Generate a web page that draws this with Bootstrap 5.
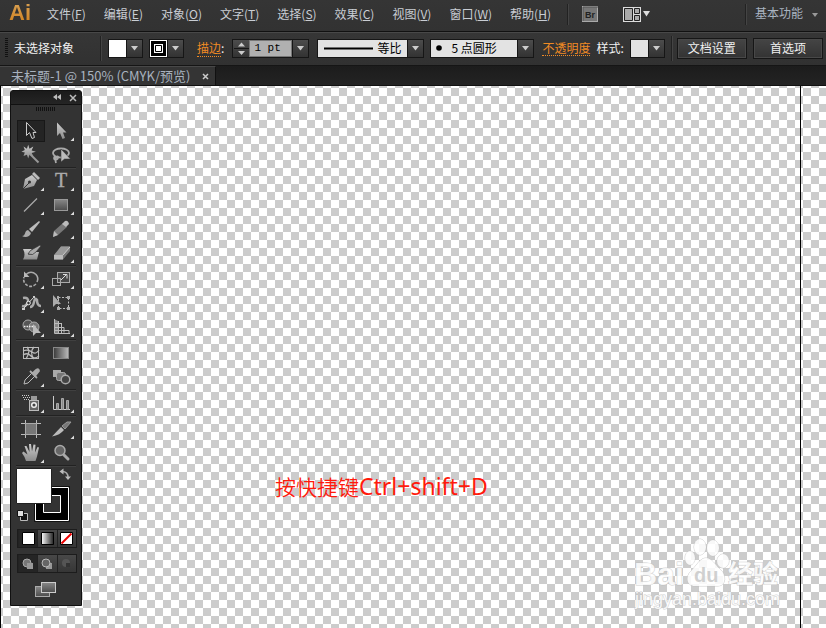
<!DOCTYPE html>
<html lang="zh-CN">
<head>
<meta charset="utf-8">
<meta name="viewport" content="width=device-width, initial-scale=1">
<title>未标题-1</title>
<link rel="stylesheet" href="https://cdn.jsdelivr.net/npm/bootstrap@5.3.0/dist/css/bootstrap.min.css">
<style>
:root{--ui:#333;--edge:#161616;--ink:#d2d2d2;--hot:#f08a24}
body{background:#333;color:var(--ink);font:12px/16px "Noto Sans CJK SC","Liberation Sans",sans-serif}
button{color:inherit;font:inherit;padding:0;border:0;background:none}
svg{display:block;flex:none}
.menu-bar{height:32px;background:linear-gradient(#353535,#323232);border-bottom:1px solid #111;padding-right:8px}
.logo{font:bold 22px/26px "Liberation Sans",sans-serif;width:39px;padding-left:9px;background:linear-gradient(#d9a45a,#cf7d18);-webkit-background-clip:text;background-clip:text;color:transparent;flex:none}
.menus{gap:18px;height:27px}
.menus a{color:#c9cdd3;text-decoration:none}
.vline{width:2px;height:21px;border-left:1px solid #222;border-right:1px solid #444;flex:none}
.workspace{color:#a9b3c0;gap:9px;height:22px}
.options-bar{height:34px;border-top:1px solid #484848;border-bottom:1px solid #151515;background:linear-gradient(#363636,#313131);padding:0 3px 2px 5px;color:#f0f0f0}
.options-bar .vline{height:25px}
.gap-a{margin-left:6px}
.gap-b{margin-left:13px}
.gap-c{margin-left:26px}
.grip{width:3px;height:20px;background:repeating-linear-gradient(#111 0 1px,#333 1px 2px);flex:none}
.hot{color:var(--hot);text-decoration:none;border-bottom:1px dotted var(--hot);line-height:15px}
.field{height:19px;border:1px solid var(--edge);background:#e3e3e3;color:#000}
.field input,.field select{appearance:none;border:1px solid #777;background:none;padding:0 0 0 4px;height:17px;min-width:0;width:100%;font:inherit;line-height:14px;color:#000;border-radius:0;outline:0}
.field .weight-input{background:#b0b0b0;font-family:"Liberation Mono",monospace;font-size:11px}
.w-weight{width:77px}
.w-profile{width:107px}
.w-brush{width:104px}
.drop{width:16px;height:17px;border-left:1px solid var(--edge);background:linear-gradient(#4c4c4c,#333);display:grid;place-items:center;flex:none}
.swatch{width:35px;height:19px;border:1px solid var(--edge)!important}
.chip{width:17px;height:17px;flex:none}
.push{width:70px;height:21px;border:1px solid var(--edge);background:linear-gradient(#454545,#333);box-shadow:inset 0 0 0 1px #484848}
.tabs-strip{height:20px;background:linear-gradient(#1c1c1c,#232323);border-bottom:1px solid #111}
.doc-tab{background:#343434;border-top:1px solid #484848;border-right:1px solid #111;padding:0 6px 0 11px;height:19px;font-size:13px;color:#a8b2bf;gap:12px}
.art{background:conic-gradient(#ccc 25%,#fff 25% 50%,#ccc 50% 75%,#fff 75%) 10px 2px/16px 16px;border-left:1px solid #000;padding:4px 0 20px 9px}
.art-edge{top:0;bottom:0;right:25px;width:1px;background:#000}
.note{left:274px;top:386px;color:#ff1a0c;font-size:21px;font-weight:350;line-height:28px;white-space:nowrap}
.note span{font-family:"Noto Sans","Open Sans",sans-serif;font-size:23px;font-weight:400}
.sign{right:40px;bottom:14px}
.tools{width:72px;background:#333;border:1px solid #111;border-radius:3px 3px 0 0}
.tools-head{height:14px;background:linear-gradient(#1a1a1a,#252525);border-bottom:1px solid #111;padding:0 4px}
.tool-grip{width:20px;height:4px;margin:2px auto 8px;background:repeating-linear-gradient(90deg,#111 0 1px,#333 1px 2px)}
.pad{padding:0 5px 3px}
.group{display:grid;grid-template-columns:30px 30px;border-bottom:1px solid #222;box-shadow:0 1px #404040;margin-bottom:1px}
.group svg{width:30px;height:24px}
.group .picked{background:linear-gradient(#242424,#242424) 1px 1px/28px 22px no-repeat}
.picked rect{stroke:#181818;fill:none}
.paints{margin:2px 0 5px}
.modes{height:19px;border:1px solid #1c1c1c;background:linear-gradient(#484848,#363636);margin:0 -1px 6px 1px}
.modes button{flex:1;display:grid;place-items:center;border-left:1px solid #222}
.modes button:first-child{background:#252525}
</style>
<script src="https://cdn.jsdelivr.net/npm/bootstrap@5.3.0/dist/js/bootstrap.bundle.min.js"></script>
</head>
<body class="d-flex flex-column min-vh-100">
<svg width="0" height="0" class="position-absolute" aria-hidden="true"><defs>
<linearGradient id="g" x2="0" y2="1"><stop stop-color="#ccc"/><stop offset="1" stop-color="#8d8d8d"/></linearGradient>
<linearGradient id="dk" x2="0" y2="1"><stop stop-color="#888"/><stop offset="1" stop-color="#4c4c4c"/></linearGradient>
<linearGradient id="h"><stop stop-color="#3a3a3a"/><stop offset="1" stop-color="#bbb"/></linearGradient>
<linearGradient id="w"><stop stop-color="#fff"/><stop offset="1" stop-color="#222"/></linearGradient>
<path id="more" d="M28 18.500V22H24.500Z" fill="#ddd" stroke="none"/>
<path id="down" d="M0 0H7L3.500 4.500Z" fill="#ccc"/>
</defs></svg>

<header class="menu-bar d-flex align-items-start">
  <div class="logo">Ai</div>
  <nav class="menus d-flex align-items-center text-nowrap ms-2">
    <a href="#">文件(<u>F</u>)</a><a href="#">编辑(<u>E</u>)</a><a href="#">对象(<u>O</u>)</a><a href="#">文字(<u>T</u>)</a><a href="#">选择(<u>S</u>)</a><a href="#">效果(<u>C</u>)</a><a href="#">视图(<u>V</u>)</a><a href="#">窗口(<u>W</u>)</a><a href="#">帮助(<u>H</u>)</a>
  </nav>
  <div class="d-flex align-items-center ms-3 mt-1"><span class="vline"></span>
    <button class="gap-b" aria-label="Bridge"><svg width="17" height="17"><rect x=".5" y=".5" width="15" height="15" fill="#777" stroke="#aaa"/><path d="M1 15V1H16" fill="none" stroke="#555"/><text x="3" y="12" font-size="9" font-weight="bold" font-family="Liberation Sans" fill="#222">Br</text></svg></button>
    <button class="ms-4" aria-label="排列文档"><svg width="28" height="17"><rect x="0" y="1" width="18" height="15" fill="#ddd"/><path d="M1.500 2.500h8v12h-8zM11.500 2.500h5v5h-5zM11.500 9.500h5v5h-5z" fill="#aaa" stroke="#222"/><path d="M20 5h7l-3.500 5.500z" fill="#ddd"/></svg></button>
  </div>
  <div class="d-flex ms-auto align-items-center"><span class="vline mt-1"></span>
    <button class="workspace d-flex align-items-center text-nowrap ms-2">基本功能<svg width="6" height="4" class="mt-1"><path d="M0 0h6L3 4z" fill="#999"/></svg></button></div>
</header>

<div class="options-bar d-flex align-items-center text-nowrap">
  <span class="grip"></span><span class="gap-a">未选择对象</span><span class="vline gap-c"></span>
  <button class="swatch d-flex gap-a" aria-label="填色"><span class="chip bg-white"></span><span class="drop"><svg width="7" height="5"><use href="#down"/></svg></span></button>
  <button class="swatch d-flex gap-a" aria-label="描边颜色"><svg class="chip" viewBox="0 0 17 17"><path d="M0 0H17V17H0Z" fill="#fff"/><path d="M1 1H16V16H1Z"/><path d="M4 4H13V13H4Z" fill="#fff"/><path d="M5.500 5.500H11.500V11.500H5.500Z" fill="#fff" stroke="#000"/></svg><span class="drop"><svg width="7" height="5"><use href="#down"/></svg></span></button>
  <label for="weight" class="gap-b"><a class="hot" href="#">描边</a>:</label>
  <div class="field w-weight d-flex ms-2">
    <button class="drop border-0" aria-label="调整粗细"><svg width="15" height="17"><path d="M4 6.500h7L7.500 2.500zM4 11h7l-3.500 4z" fill="#ccc"/><path d="M0 8.500H15" stroke="#161616"/></svg></button>
    <input id="weight" class="weight-input" value="1 pt">
    <button class="drop" aria-label="粗细列表"><svg width="7" height="5"><use href="#down"/></svg></button></div>
  <div class="field w-profile d-flex align-items-center ms-2"><svg width="55" height="3" class="ps-1"><path d="M2 1.500H51" stroke="#000" stroke-width="2"/></svg>
    <select aria-label="宽度配置" class="border-0"><option>等比</option></select><span class="drop"><svg width="7" height="5"><use href="#down"/></svg></span></div>
  <div class="field w-brush d-flex align-items-center gap-a"><svg width="16" height="8"><circle cx="8" cy="4" r="2.800"/></svg>
    <select aria-label="画笔" class="border-0"><option>5 点圆形</option></select><span class="drop"><svg width="7" height="5"><use href="#down"/></svg></span></div>
  <a class="hot ms-2" href="#">不透明度</a><span class="gap-a">样式:</span>
  <button class="swatch d-flex gap-a" aria-label="样式"><span class="chip" style="background:#e2e2e2"></span><span class="drop"><svg width="7" height="5"><use href="#down"/></svg></span></button>
  <span class="vline gap-a"></span><button class="push ms-1">文档设置</button><button class="push ms-auto">首选项</button>
</div>

<div class="tabs-strip d-flex"><div class="doc-tab d-flex align-items-center text-nowrap">未标题-1 @ 150% (CMYK/预览)<button aria-label="关闭"><svg width="7" height="7"><path d="M1 1l5 5M6 1L1 6" stroke="#ccc" stroke-width="1.500"/></svg></button></div></div>

<main class="art position-relative flex-grow-1">
  <div class="art-edge position-absolute"></div>
  <div class="note position-absolute">按快捷键<span>Ctrl+shift+D</span></div>
  <svg class="sign position-absolute" width="152" height="76" viewBox="0 0 152 76" fill="#fff" fill-opacity=".85" stroke="#bbb" stroke-opacity=".7" paint-order="stroke" font-family="Liberation Sans,Noto Sans CJK SC,sans-serif" font-weight="bold">
    <text x="0" y="47" font-size="32">Bai</text>
    <ellipse cx="66" cy="9" rx="6" ry="8"/><ellipse cx="79" cy="10" rx="6" ry="8"/><ellipse cx="56" cy="20" rx="5" ry="7"/><ellipse cx="89" cy="23" rx="6" ry="7"/>
    <path d="M72 20C78 20 81 27 86 31C93 37 92 48 84 48H61C52 48 51 38 58 32C63 27 66 20 72 20Z"/>
    <text x="60" y="44" font-size="20" fill="#c8c8c8" stroke="none">du</text>
    <text x="94" y="45" font-size="25" font-family="Noto Sans CJK SC">经验</text>
    <text x="1" y="67" font-size="18" font-weight="normal" font-family="Liberation Sans">jingyan.baidu.com</text>
  </svg>

  <aside class="tools position-relative">
    <div class="tools-head d-flex align-items-center justify-content-end gap-2"><button aria-label="折叠"><svg width="8" height="7"><path d="M4 0v6L0 3zM8 0v6L4 3z" fill="#bbb"/></svg></button><button aria-label="关闭面板"><svg width="8" height="8"><path d="M1 1l6 6M7 1L1 7" stroke="#bbb" stroke-width="1.500"/></svg></button></div>
    <div class="tool-grip"></div>
    <div class="pad">
      <div class="group">
        <button class="picked" aria-label="选择"><svg><rect x="1.500" y="1.500" width="27" height="21"/><path d="M10.500 3.500V16.500L13.500 13.500L16 19.500L18.500 18.500L17 13.500H20Z" fill="#222" stroke="#ccc"/></svg></button>
        <button aria-label="直接选择"><svg><path d="M11 3.500V17L14 14L16.500 20L19 19L17 13.500H20.500Z" fill="url(#g)"/><use href="#more"/></svg></button>
        <button aria-label="魔棒"><svg><path d="M12 1l1.500 4.500L18 3l-2 4.500 5 1.500-5 1.500 2 3.500-4.500-1.500L12 17l-1.500-4.500L6.500 14l1.500-4L4 9l4-2-1.500-4 4 2.500z" transform="translate(2 1) scale(.85)" fill="url(#g)"/><path d="M14 11l8.500 8.500" stroke="#999" stroke-width="2"/></svg></button>
        <button aria-label="套索"><svg fill="none" stroke="#aaa" stroke-width="1.800"><ellipse cx="15" cy="10" rx="8" ry="4.500"/><path d="M9 13c-3 4 2 5 3 2s-4-2-2 5"/><path d="M15 6v13l3.500-3h6z" fill="#bbb" stroke="#333" stroke-width=".5"/></svg></button>
      </div>
      <div class="group">
        <button aria-label="钢笔"><svg><path d="M7 20L9 10 16 6 21 11 18 17Z" fill="url(#g)"/><path d="M16 5l2-2 6 6-2 2z" fill="#bbb"/><path d="M7 20l6-6" stroke="#333"/><circle cx="13.500" cy="13" r="1.500" fill="#333"/><use href="#more"/></svg></button>
        <button aria-label="文字"><svg><text x="15" y="18" text-anchor="middle" font-size="20" font-family="Liberation Serif" fill="#aaa" stroke="#aaa" stroke-width=".4">T</text><use href="#more"/></svg></button>
        <button aria-label="直线段"><svg><path d="M8 18.500L21 5.500" stroke="#aaa" stroke-width="1.300"/><use href="#more"/></svg></button>
        <button aria-label="矩形"><svg><rect x="8.500" y="6.500" width="13" height="11" fill="url(#dk)" stroke="#999"/><use href="#more"/></svg></button>
        <button aria-label="画笔"><svg><path d="M6 19c4 0 2-5 6-6l3 3c-1 4-6 5-9 3z" fill="#aaa"/><path d="M13 12L23 4l1 1-8 10z" fill="#bbb"/></svg></button>
        <button aria-label="铅笔"><svg><path d="M7 20l1-6L17 6l4 4-9 8z" fill="#777"/><path d="M7 20l1-6 4 4zM16 7l3-3q3-1 4 3l-3 3z" fill="#bbb"/><use href="#more"/></svg></button>
        <button aria-label="斑点画笔"><svg><path d="M7 8h9l-4 5q2 2 5 0l2-2h4l-2 7.500H7q3-5 0-10.500z" fill="url(#g)"/><path d="M12 13q2-4 5-5l7-4 1 1-5 6q-3 4-8 2z" fill="#aaa" stroke="#333" stroke-width=".7"/></svg></button>
        <button aria-label="橡皮擦"><svg><path d="M8 15L15 5.500H24V10L17 18.500H8Z" fill="#777"/><path d="M8 14L15 5.500H24L17 14Z" fill="#999"/><path d="M8 14h9v4.500H8z" fill="#bbb"/><path d="M17 14l7-8" stroke="#ccc"/><use href="#more"/></svg></button>
      </div>
      <div class="group">
        <button aria-label="旋转"><svg fill="none" stroke="#aaa" stroke-width="1.600"><path d="M10 7.500Q15 3 20 7.500Q23 11 21 15"/><path d="M20 17Q14 22 9 16.500Q7 14 8 10" stroke-dasharray="3 1.500"/><path d="M8 4.500v5.500h5.500z" fill="#bbb" stroke="none"/><use href="#more"/></svg></button>
        <button aria-label="比例缩放"><svg fill="none" stroke="#aaa"><rect x="11.500" y="5.500" width="12" height="10" fill="#484848"/><rect x="6.500" y="11.500" width="8" height="7"/><path d="M15 13l5-5M17 7.500h4v4" stroke="#ddd"/><use href="#more"/></svg></button>
        <button aria-label="宽度"><svg fill="none" stroke="#aaa" stroke-width="2.500"><path d="M7 7q6-1 5 4-2 5-6 4M14 16q3 0 4-5 1-5 3-2 0 6 4 6"/><path d="M8 17L18 6" stroke="#ddd" stroke-width="1"/><circle cx="12.500" cy="12" r="1.800" fill="#333" stroke="#eee" stroke-width="1"/><path d="M6 17h3v2H6zM17 5h2v2h-2z" fill="#ccc" stroke="none"/><use href="#more"/></svg></button>
        <button aria-label="自由变换"><svg><rect x="12.500" y="6.500" width="10" height="11" fill="none" stroke="#bbb" stroke-dasharray="2 1.500"/><path d="M7 4v12l3-3h5z" fill="#aaa"/><path d="M11 5h2v3h-2zM21 5h3v3h-3zM11 16h3v3h-3zM21 16h3v3h-3z" fill="#aaa"/></svg></button>
        <button aria-label="形状生成器"><svg><circle cx="12" cy="10" r="5" fill="#555" stroke="#aaa"/><circle cx="18" cy="12" r="5" fill="#777" stroke="#aaa"/><path d="M8 11.500H20" stroke="#eee" stroke-width="1.500" stroke-dasharray="1.500 1"/><path d="M17 9v12l3-3h5z" fill="#bbb"/><use href="#more"/></svg></button>
        <button aria-label="透视网格"><svg fill="none" stroke="#bbb"><path d="M8 4l4 2v12H8z" fill="#888" stroke="none"/><path d="M8.500 4v14.500H24M12.500 6v12M15.500 8v10M8 8.500h7M8 12.500h10v5M8 15.500h15v3"/><use href="#more"/></svg></button>
      </div>
      <div class="group">
        <button aria-label="网格"><svg fill="none" stroke="#bbb" stroke-width="1.300"><rect x="7.500" y="6.500" width="15" height="11" fill="#333" stroke-width="1"/><path d="M7 10q5-2 9 1t7-2M7 14q5-3 8 1t8 0M11 6q4 4-1 12M18 6q-5 5 0 12"/></svg></button>
        <button aria-label="渐变"><svg><rect x="7.500" y="6.500" width="15" height="11" fill="url(#h)" stroke="#888"/></svg></button>
        <button aria-label="吸管"><svg><path d="M8 19l1-4 7-7 3 3-7 7z" fill="#333" stroke="#bbb"/><path d="M14 6l7 7M17 8l3-3q3-2 3 1l-4 5z" fill="#aaa" stroke="#aaa" stroke-width="1.800"/><use href="#more"/></svg></button>
        <button aria-label="混合"><svg><path d="M7 5h8v7H7z" fill="#aaa"/><rect x="10.500" y="7.500" width="9" height="8" rx="2" fill="#777" stroke="#aaa"/><circle cx="19.500" cy="14.500" r="4.300" fill="#444" stroke="#aaa" stroke-width="1.500"/></svg></button>
      </div>
      <div class="group">
        <button aria-label="符号喷枪"><svg><rect x="13.500" y="9.500" width="9" height="10" fill="#666" stroke="#bbb"/><path d="M15 5h6v4h-6z" fill="#999"/><circle cx="18" cy="14" r="2.300" fill="#444" stroke="#eee" stroke-width="1.500"/><path d="M6 4.500h8M7 6.500h7M8 8.500h5" stroke="#ccc" stroke-dasharray="1 1"/><use href="#more"/></svg></button>
        <button aria-label="柱形图"><svg><path d="M7.500 5v13.500H24" fill="none" stroke="#ccc"/><path d="M10.500 12.500h2v6h-2zM15.500 7.500h2v11h-2zM20.500 9.500h2v9h-2z" fill="#888" stroke="#aaa"/><use href="#more"/></svg></button>
      </div>
      <div class="group">
        <button aria-label="画板"><svg><path d="M9.500 3V21M20.500 3V21M5 6.500H25M5 17.500H25" stroke="#bbb"/><path d="M9.500 6.500h11v11h-11z" fill="#777" stroke="#aaa"/></svg></button>
        <button aria-label="切片"><svg><path d="M6 19.500L15 10l3 3q-4 5-12 6.500z" fill="#bbb"/><path d="M16 9l5-4h4l-6 7z" fill="#777" stroke="#999"/><use href="#more"/></svg></button>
        <button aria-label="抓手"><svg><path d="M10 20q-1-4-4-8l1.500-1.500 4 3-3-8.500h2l3 6-.5-8h2l1 7.500 1.500-7 2 .2-.5 7.800 2.500-5.500 1.500.5-2 9-1.500 4.500z" fill="url(#g)"/><use href="#more"/></svg></button>
        <button aria-label="缩放"><svg><path d="M18 14l4 4" stroke="#aaa" stroke-width="3" stroke-linecap="round"/><circle cx="14" cy="9.500" r="5" fill="#666" stroke="#aaa" stroke-width="1.500"/></svg></button>
      </div>
      <button class="paints d-block" aria-label="填色和描边"><svg width="60" height="56" viewBox="0 0 60 56"><path d="M18.500 18.500H53.500V53.500H18.500Z" stroke="#111"/><path d="M19.500 19.500H52.500V52.500H19.500Z" stroke="#fff"/><path d="M27.500 27.500H44.500V44.500H27.500Z" fill="#333" stroke="#fff"/><path d="M.500.500H35.500V35.500H.500Z" fill="#fff" stroke="#222"/><path d="M46 3.500q6 0 6 6" fill="none" stroke="#aaa" stroke-width="1.500"/><path d="M43.500 3.500l4-3v6zM49 8.500h6l-3 3.500z" fill="#bbb"/><path d="M4.500 45.500h7v7h-7z" fill="#111" stroke="#bbb"/><path d="M1.500 42.500h6v6h-6z" fill="#ddd" stroke="#111"/></svg></button>
      <div class="modes d-flex">
        <button aria-label="颜色"><svg width="13" height="13"><path d="M.500.500h12v12H.500z" fill="#fff" stroke="#000"/></svg></button><button aria-label="渐变填充"><svg width="13" height="13"><path d="M.500.500h12v12H.500z" fill="url(#w)" stroke="#000"/></svg></button><button aria-label="无"><svg width="13" height="13"><path d="M.500.500h12v12H.500z" fill="#fff" stroke="#000"/><path d="M1.500 11.500l10-10" stroke="#e00" stroke-width="2"/></svg></button></div>
      <div class="modes d-flex">
        <button aria-label="正常绘图"><svg width="12" height="12"><circle cx="5" cy="5" r="4" fill="#777" stroke="#aaa"/><path d="M5 5h6v6H5z" fill="#999"/></svg></button><button aria-label="背面绘图"><svg width="12" height="12"><path d="M5 5h6v6H5z" fill="#999"/><circle cx="5" cy="5" r="4" fill="#666" stroke="#bbb"/></svg></button><button aria-label="内部绘图"><svg width="12" height="12"><circle cx="5" cy="5" r="4" fill="#555"/><path d="M5 5h4v4H5z" fill="#333"/></svg></button></div>
      <button class="d-block mx-auto mt-2 mb-1" aria-label="更改屏幕模式"><svg width="24" height="17"><rect x="1.500" y="5.500" width="14" height="10" fill="url(#dk)" stroke="#aaa"/><rect x="7.500" y="1.500" width="14" height="10" fill="url(#dk)" stroke="#ccc"/></svg></button>
    </div>
  </aside>
</main>
</body>
</html>
